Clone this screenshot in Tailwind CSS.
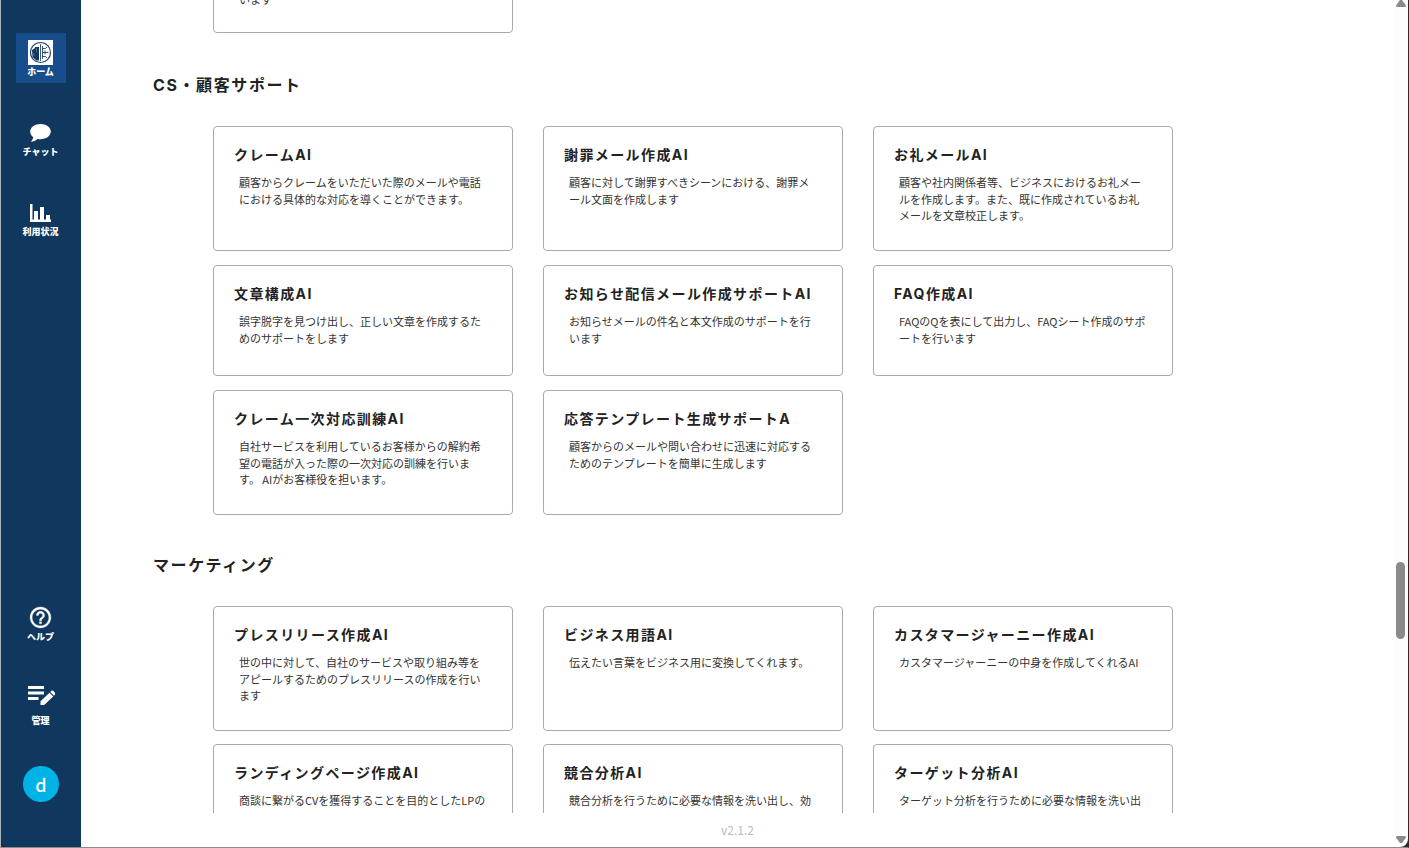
<!DOCTYPE html>
<html lang="ja">
<head>
    <meta charset="UTF-8">
    <meta name="viewport" content="width=device-width, initial-scale=1.0">
    <script src="https://cdn.jsdelivr.net/npm/@tailwindcss/browser@4"></script>
    <title>ホーム</title>
</head>
<body class="h-screen overflow-hidden bg-[#2b2b2b] font-['Noto_Sans_CJK_JP',sans-serif] text-[#222]">
<div class="flex h-full border-r border-b border-l border-r-[#2b2b2b] border-b-[#8c8c8c] border-l-[#a9b4c0]">
    <!-- Sidebar -->
    <nav class="flex w-20 shrink-0 flex-col items-center justify-between rounded-bl-lg bg-[#10375e] pt-[33px] pb-[45px] text-[9px] leading-[14px] font-black text-white">
        <div class="flex flex-col gap-[30px]">
            <a href="#" class="flex size-[50px] flex-col items-center bg-[#164d8a] pt-[7px] pr-px">
                <svg class="size-[25px]" viewBox="0 0 25 25" fill="none" stroke="#24466b">
                    <path d="M0 0h25v25H0z" fill="#fff" stroke="none"/>
                    <circle cx="12.5" cy="12.5" r="10" stroke-width="1.2"/>
                    <path d="M4 10l3-2v-1h4v13.500H8.500l-4-3.500z" fill="#10375e" stroke="none"/>
                    <path d="M12.500 4v17M14.500 6v13M14.500 8.500h3l1.500-1.500M14.500 12.500h6M14.500 16.500h3l1.500 1.500M17 10.500v4" stroke-width=".9"/>
                    <path d="M8.500 8v4M6 13v3" stroke="#6f88a3" stroke-width=".7"/>
                </svg>
                <span>ホーム</span>
            </a>
            <a href="#" class="flex size-[50px] flex-col items-center pt-[7px] pr-px">
                <svg class="size-[25px]" viewBox="0 0 25 25" fill="#fff">
                    <path d="M12.500 4C6.700 4 2.200 7.400 2.200 11.600c0 2.300 1.200 4.300 3 5.700-.3 1.600-1 3-2.500 4.500 2.700 0 5-1 6.500-2.800 1 .2 2.200.3 3.300.3 5.800 0 10.300-3.400 10.300-7.700S18.300 4 12.500 4z"/>
                </svg>
                <span class="whitespace-nowrap">チャット</span>
            </a>
            <a href="#" class="flex size-[50px] flex-col items-center pt-[7px] pr-px">
                <svg class="size-[25px]" viewBox="0 0 25 25" fill="#fff">
                    <path d="M2 4h2.500v15.500H23V22H2zM6 11h4v8.500H6zM12 7h4v12.500h-4zM18 15h4v4.500h-4z"/>
                </svg>
                <span class="whitespace-nowrap">利用状況</span>
            </a>
        </div>
        <div class="flex flex-col items-center">
            <a href="#" class="flex size-[50px] flex-col items-center pt-[7px] pr-px">
                <svg class="size-[25px]" viewBox="0 0 24 24" fill="#fff">
                    <path d="M11 18h2v-2h-2v2zm1-16C6.480 2 2 6.480 2 12s4.480 10 10 10 10-4.480 10-10S17.520 2 12 2zm0 18c-4.410 0-8-3.590-8-8s3.590-8 8-8 8 3.590 8 8-3.590 8-8 8zm0-14c-2.210 0-4 1.790-4 4h2c0-1.100.9-2 2-2s2 .9 2 2c0 2-3 1.750-3 5h2c0-2.250 3-2.500 3-5 0-2.210-1.790-4-4-4z" stroke="#fff" stroke-width=".3"/>
                </svg>
                <span>ヘルプ</span>
            </a>
            <a href="#" class="mt-[35px] flex w-[50px] flex-col items-center gap-[5px] pr-px">
                <svg class="h-[26px] w-[28px]" viewBox="0 0 28 26" fill="#fff">
                    <path d="M1 3h16v3H1zM1 8.500h16v3H1zM1 14h10.500v3H1zM13.500 22v-3.700l9-8.500 3.700 3.700-9 8.500zM23.300 9l1.200-1.200q.8-.8 1.600 0l2 2q.8.8 0 1.600L27 12.700z"/>
                </svg>
                <span>管理</span>
            </a>
            <button class="mt-[38px] size-9 rounded-full bg-[#00b3e6] text-[18px] font-medium">d</button>
        </div>
    </nav>

    <main class="flex min-w-0 flex-1 flex-col bg-white">
        <div class="flex min-h-0 flex-1 flex-col overflow-hidden pl-[72px]">
            <!-- end of the previous category -->
            <div class="mb-0.5 ml-[60px] flex h-[33px] w-[300px] shrink-0 flex-col justify-end overflow-hidden">
                <a href="#" class="rounded-[4px] border border-[#aaa] px-[25px] pt-5 pb-[25px] text-[11px] leading-normal text-[#333]">います</a>
            </div>

            <section class="shrink-0">
                <h2 class="mt-[38px] mb-[29px] font-['Inter','Noto_Sans_CJK_JP',sans-serif] text-[16px] leading-6 font-bold tracking-widest">CS・顧客サポート</h2>
                <div class="ml-[60px] grid grid-cols-[repeat(auto-fill,300px)] gap-x-[30px] gap-y-[14px]">
                    <a href="#" class="min-h-[125px] rounded-[4px] border border-[#aaa] px-5 pt-[18px]">
                        <h3 class="font-['Inter','Noto_Sans_CJK_JP',sans-serif] text-[14px] leading-5 font-bold tracking-widest">クレームAI</h3>
                        <p class="mt-[9px] px-[5px] text-[11px] leading-normal text-[#333]">顧客からクレームをいただいた際のメールや電話における具体的な対応を導くことができます。</p>
                    </a>
                    <a href="#" class="min-h-[125px] rounded-[4px] border border-[#aaa] px-5 pt-[18px]">
                        <h3 class="font-['Inter','Noto_Sans_CJK_JP',sans-serif] text-[14px] leading-5 font-bold tracking-widest">謝罪メール作成AI</h3>
                        <p class="mt-[9px] px-[5px] text-[11px] leading-normal text-[#333]">顧客に対して謝罪すべきシーンにおける、謝罪メール文面を作成します</p>
                    </a>
                    <a href="#" class="min-h-[125px] rounded-[4px] border border-[#aaa] px-5 pt-[18px]">
                        <h3 class="font-['Inter','Noto_Sans_CJK_JP',sans-serif] text-[14px] leading-5 font-bold tracking-widest">お礼メールAI</h3>
                        <p class="mt-[9px] px-[5px] text-[11px] leading-normal text-[#333]">顧客や社内関係者等、ビジネスにおけるお礼メールを作成します。また、既に作成されているお礼メールを文章校正します。</p>
                    </a>
                    <a href="#" class="min-h-[111px] rounded-[4px] border border-[#aaa] px-5 pt-[18px]">
                        <h3 class="font-['Inter','Noto_Sans_CJK_JP',sans-serif] text-[14px] leading-5 font-bold tracking-widest">文章構成AI</h3>
                        <p class="mt-[9px] px-[5px] text-[11px] leading-normal text-[#333]">誤字脱字を見つけ出し、正しい文章を作成するためのサポートをします</p>
                    </a>
                    <a href="#" class="min-h-[111px] rounded-[4px] border border-[#aaa] px-5 pt-[18px]">
                        <h3 class="font-['Inter','Noto_Sans_CJK_JP',sans-serif] text-[14px] leading-5 font-bold tracking-widest">お知らせ配信メール作成サポートAI</h3>
                        <p class="mt-[9px] px-[5px] text-[11px] leading-normal text-[#333]">お知らせメールの件名と本文作成のサポートを行います</p>
                    </a>
                    <a href="#" class="min-h-[111px] rounded-[4px] border border-[#aaa] px-5 pt-[18px]">
                        <h3 class="font-['Inter','Noto_Sans_CJK_JP',sans-serif] text-[14px] leading-5 font-bold tracking-widest">FAQ作成AI</h3>
                        <p class="mt-[9px] px-[5px] text-[11px] leading-normal text-[#333]">FAQのQを表にして出力し、FAQシート作成のサポートを行います</p>
                    </a>
                    <a href="#" class="min-h-[125px] rounded-[4px] border border-[#aaa] px-5 pt-[18px]">
                        <h3 class="font-['Inter','Noto_Sans_CJK_JP',sans-serif] text-[14px] leading-5 font-bold tracking-widest">クレーム一次対応訓練AI</h3>
                        <p class="mt-[9px] px-[5px] text-[11px] leading-normal text-[#333]">自社サービスを利用しているお客様からの解約希望の電話が入った際の一次対応の訓練を行います。 AIがお客様役を担います。</p>
                    </a>
                    <a href="#" class="min-h-[125px] rounded-[4px] border border-[#aaa] px-5 pt-[18px]">
                        <h3 class="font-['Inter','Noto_Sans_CJK_JP',sans-serif] text-[14px] leading-5 font-bold tracking-widest">応答テンプレート生成サポートA</h3>
                        <p class="mt-[9px] px-[5px] text-[11px] leading-normal text-[#333]">顧客からのメールや問い合わせに迅速に対応するためのテンプレートを簡単に生成します</p>
                    </a>
                </div>
            </section>

            <section class="shrink-0">
                <h2 class="mt-[38px] mb-[29px] font-['Inter','Noto_Sans_CJK_JP',sans-serif] text-[16px] leading-6 font-bold tracking-widest">マーケティング</h2>
                <div class="ml-[60px] grid grid-cols-[repeat(auto-fill,300px)] gap-x-[30px] gap-y-[13px]">
                    <a href="#" class="min-h-[125px] rounded-[4px] border border-[#aaa] px-5 pt-[18px]">
                        <h3 class="font-['Inter','Noto_Sans_CJK_JP',sans-serif] text-[14px] leading-5 font-bold tracking-widest">プレスリリース作成AI</h3>
                        <p class="mt-[9px] px-[5px] text-[11px] leading-normal text-[#333]">世の中に対して、自社のサービスや取り組み等をアピールするためのプレスリリースの作成を行います</p>
                    </a>
                    <a href="#" class="min-h-[125px] rounded-[4px] border border-[#aaa] px-5 pt-[18px]">
                        <h3 class="font-['Inter','Noto_Sans_CJK_JP',sans-serif] text-[14px] leading-5 font-bold tracking-widest">ビジネス用語AI</h3>
                        <p class="mt-[9px] px-[5px] text-[11px] leading-normal text-[#333]">伝えたい言葉をビジネス用に変換してくれます。</p>
                    </a>
                    <a href="#" class="min-h-[125px] rounded-[4px] border border-[#aaa] px-5 pt-[18px]">
                        <h3 class="font-['Inter','Noto_Sans_CJK_JP',sans-serif] text-[14px] leading-5 font-bold tracking-widest">カスタマージャーニー作成AI</h3>
                        <p class="mt-[9px] px-[5px] text-[11px] leading-normal text-[#333]">カスタマージャーニーの中身を作成してくれるAI</p>
                    </a>
                    <a href="#" class="min-h-[125px] rounded-[4px] border border-[#aaa] px-5 pt-[18px]">
                        <h3 class="font-['Inter','Noto_Sans_CJK_JP',sans-serif] text-[14px] leading-5 font-bold tracking-widest">ランディングページ作成AI</h3>
                        <p class="mt-[9px] px-[5px] text-[11px] leading-normal text-[#333]">商談に繋がるCVを獲得することを目的としたLPの</p>
                    </a>
                    <a href="#" class="min-h-[125px] rounded-[4px] border border-[#aaa] px-5 pt-[18px]">
                        <h3 class="font-['Inter','Noto_Sans_CJK_JP',sans-serif] text-[14px] leading-5 font-bold tracking-widest">競合分析AI</h3>
                        <p class="mt-[9px] px-[5px] text-[11px] leading-normal text-[#333]">競合分析を行うために必要な情報を洗い出し、効</p>
                    </a>
                    <a href="#" class="min-h-[125px] rounded-[4px] border border-[#aaa] px-5 pt-[18px]">
                        <h3 class="font-['Inter','Noto_Sans_CJK_JP',sans-serif] text-[14px] leading-5 font-bold tracking-widest">ターゲット分析AI</h3>
                        <p class="mt-[9px] px-[5px] text-[11px] leading-normal text-[#333]">ターゲット分析を行うために必要な情報を洗い出</p>
                    </a>
                </div>
            </section>
        </div>
        <footer class="h-[34px] shrink-0 text-center text-[12px] leading-[34px] text-[#bbb]">v2.1.2</footer>
    </main>

    <!-- Scrollbar -->
    <div class="flex w-[14px] shrink-0 flex-col items-center rounded-br-lg bg-[#fcfcfc] pr-px pb-1">
        <svg class="h-[7px] w-[10px]" viewBox="0 0 10 7" fill="#8a8a8a"><path d="M4 0h2l4 5.500q0 1.500-1 1.500H1q-1 0-1-1.500z"/></svg>
        <div class="flex-[555]"></div>
        <div class="h-[77px] w-[9px] rounded-full bg-[#8a8a8a]"></div>
        <div class="flex-[197]"></div>
        <svg class="h-[7px] w-[10px]" viewBox="0 0 10 7" fill="#8a8a8a"><path d="M4 7h2l4-5.500Q10 0 9 0H1Q0 0 0 1.500z"/></svg>
    </div>
</div>
</body>
</html>
